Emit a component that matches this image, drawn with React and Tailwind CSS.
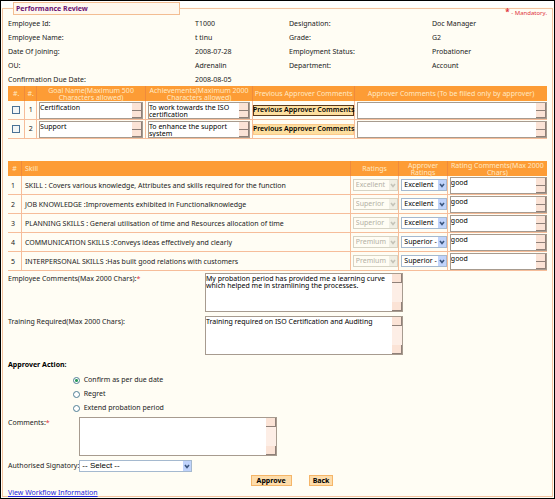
import React, { useState } from "react";

const details = [
  ["Employee Id:", "T1000", "Designation:", "Doc Manager"],
  ["Employee Name:", "t tinu", "Grade:", "G2"],
  ["Date Of Joining:", "2008-07-28", "Employment Status:", "Probationer"],
  ["OU:", "Adrenalin", "Department:", "Account"],
  ["Confirmation Due Date:", "2008-08-05", "", ""],
];

const goals = [
  { goal: "Certification", achievement: "To work towards the ISO certification" },
  { goal: "Support", achievement: "To enhance the support system" },
];

const skills = [
  { text: "SKILL : Covers various knowledge, Attributes and skills required for the function", rating: "Excellent", approver: "Excellent" },
  { text: "JOB KNOWLEDGE :Improvements exhibited in Functionalknowledge", rating: "Superior", approver: "Excellent" },
  { text: "PLANNING SKILLS : General utilisation of time and Resources allocation of time", rating: "Superior", approver: "Excellent" },
  { text: "COMMUNICATION SKILLS :Conveys ideas effectively and clearly", rating: "Premium", approver: "Superior -" },
  { text: "INTERPERSONAL SKILLS :Has built good relations with customers", rating: "Premium", approver: "Superior -" },
];

const actions = ["Confirm as per due date", "Regret", "Extend probation period"];

// Text area with the old style scroll bar beside it
const TextBox = ({ label, id, value = "", tall = false }) => (
  <div
    className={`flex w-full border border-[#a79b8f] bg-white ${tall ? "h-[39px]" : "h-[17px]"}`}
  >
    <textarea
      id={id}
      aria-label={label}
      defaultValue={value}
      className="block h-full min-w-0 flex-1 resize-none overflow-hidden bg-white pt-px leading-[7px] text-black outline-none"
    />
    <div aria-hidden="true" className="flex w-[10px] shrink-0 flex-col justify-between bg-[#fdeee6]">
      <span className={`block border-r border-b border-[#8f8078] bg-[#fbe3d6] ${tall ? "h-[9px]" : "h-[8px]"}`} />
      <span className={`block border-r border-b border-[#8f8078] bg-[#fbe3d6] ${tall ? "h-[9px]" : "h-[7px]"}`} />
    </div>
  </div>
);

const SelectBox = ({ label, id, value, disabled = false, large = false }) => (
  <div className="relative h-[12px] w-full">
    <select
      id={id}
      aria-label={label}
      disabled={disabled}
      className={`block h-full w-full appearance-none overflow-hidden border pr-[9px] pl-[2px] leading-[10px] opacity-100 outline-none ${
        disabled
          ? "border-[#d6d3c4] bg-[#fffdf4] text-[#b3b0a4]"
          : "border-[#a5b9cf] bg-white text-black"
      } ${large ? "font-['Liberation_Sans',sans-serif] text-[8px]" : ""}`}
    >
      <option>{value}</option>
    </select>
    <span
      className={`pointer-events-none absolute top-px right-px bottom-px flex w-[8px] items-center justify-center ${
        disabled ? "bg-[#f0eee3] text-[#c5c3b8]" : "bg-[#c0d3fb] text-[#3c567f]"
      }`}
    >
      <svg viewBox="0 0 6 5" className="h-[5px] w-[6px]" fill="none" stroke="currentColor" strokeWidth="1.6">
        <path d="M1 1 L3 3.4 L5 1" />
      </svg>
    </span>
  </div>
);

const Th = ({ children, left = false }) => (
  <th
    className={`h-[15px] border-r border-[#f08a3c] px-px align-middle leading-[7px] font-normal text-[#ffe9c4] last:border-r-0 ${
      left ? "pl-[3px] text-left" : "text-center"
    }`}
  >
    {children}
  </th>
);

const cell = "h-[19px] border-r border-b border-[#f6bd9a] align-middle last:border-r-0";

const App = () => {
  const [action, setAction] = useState(actions[0]);

  return (
    <div className="min-h-screen border border-black bg-[#fffdf4] font-['Noto_Sans',Verdana,sans-serif] text-[7px] leading-[8px] text-[#222]">
      <form className="bg-gradient-to-b from-white from-[6px] to-[#fffdf4] to-[6px] px-px pt-px pb-px" onSubmit={(e) => e.preventDefault()}>
        <fieldset className="min-w-0 border border-[#f3c3a0] px-[5px] pb-0">
          <legend className="ml-[5px] h-[13px] w-[31%] border border-[#f3bd92] bg-[#fff8ee] px-[2px] pt-[2px] font-bold text-[#6b1273]">
            Performance Review
          </legend>

          <p className="-mt-[7px] h-[9px] text-right text-[6px] text-[#e0323c]">
            <b className="text-[8px]">*</b> - Mandatory.
          </p>

          <dl className="-mb-px">
            {details.map((row) => (
              <div key={row[0]} className="grid h-[14px] grid-cols-[187fr_94fr_143fr_115fr] items-center">
                <dt>{row[0]}</dt>
                <dd>{row[1]}</dd>
                <dt>{row[2]}</dt>
                <dd>{row[3]}</dd>
              </div>
            ))}
          </dl>

          <table className="w-full table-fixed border-separate border-spacing-0">
            <colgroup>
              <col className="w-[3.2%]" />
              <col className="w-[2.2%]" />
              <col className="w-[20.2%]" />
              <col className="w-[19.9%]" />
              <col className="w-[18.9%]" />
              <col />
            </colgroup>
            <thead className="bg-[#fd9c35]">
              <tr>
                <Th>#.</Th>
                <Th>#.</Th>
                <Th>Goal Name(Maximum 500 Characters allowed)</Th>
                <Th>Achievements(Maximum 2000 Characters allowed)</Th>
                <Th>Previous Approver Comments</Th>
                <Th>Approver Comments (To be filled only by approver)</Th>
              </tr>
            </thead>
            <tbody>
              {goals.map((item, index) => (
                <tr key={item.goal}>
                  <td className={cell}>
                    <input
                      type="checkbox"
                      aria-label={`Select ${item.goal}`}
                      className="mx-auto block h-[8px] w-[8px] appearance-none border border-[#4a7296] bg-[#f3f6f6] checked:bg-[#4a7296]"
                    />
                  </td>
                  <td className={`${cell} text-center`}>{index + 1}</td>
                  <td className={`${cell} px-[2px]`}>
                    <TextBox label="Goal Name" value={item.goal} />
                  </td>
                  <td className={`${cell} px-[2px]`}>
                    <TextBox label="Achievements" value={item.achievement} />
                  </td>
                  <td className={cell}>
                    <button
                      type="button"
                      className={`flex h-[11px] w-full items-center justify-center border bg-[#fddf9f] leading-[8px] font-semibold whitespace-nowrap text-black ${
                        index === 0 ? "border-[#5c3a1a]" : "border-[#fbc98a]"
                      }`}
                    >
                      Previous Approver Comments
                    </button>
                  </td>
                  <td className={`${cell} pl-[2px]`}>
                    <TextBox label="Approver Comments" />
                  </td>
                </tr>
              ))}
            </tbody>
          </table>

          <table className="mt-[22px] w-full table-fixed border-separate border-spacing-0">
            <colgroup>
              <col className="w-[2.6%]" />
              <col />
              <col className="w-[9%]" />
              <col className="w-[9%]" />
              <col className="w-[18.4%]" />
            </colgroup>
            <thead className="bg-[#fd9c35]">
              <tr>
                <Th>#</Th>
                <Th left>Skill</Th>
                <Th>Ratings</Th>
                <Th>Approver Ratings</Th>
                <Th>Rating Comments(Max 2000 Chars)</Th>
              </tr>
            </thead>
            <tbody>
              {skills.map((skill, index) => (
                <tr key={skill.text}>
                  <td className={`${cell} pt-px pl-[3px]`}>{index + 1}</td>
                  <td className={`${cell} pt-px pl-[3px] whitespace-nowrap`}>{skill.text}</td>
                  <td className={`${cell} pl-[2px]`}>
                    <SelectBox label="Ratings" value={skill.rating} disabled />
                  </td>
                  <td className={`${cell} pl-[2px]`}>
                    <SelectBox label="Approver Ratings" value={skill.approver} />
                  </td>
                  <td className={`${cell} pl-[2px]`}>
                    <TextBox label="Rating Comments" value="good" />
                  </td>
                </tr>
              ))}
            </tbody>
          </table>

          <div className="mt-[2px] grid grid-cols-[197fr_198fr_144fr] gap-y-[4px]">
            <label htmlFor="employee-comments" className="pt-[2px]">
              Employee Comments(Max 2000 Chars):<span className="text-[#e0323c]">*</span>
            </label>
            <TextBox
              id="employee-comments"
              tall
              value={"My probation period has provided me a learning curve\nwhich helped me in stramlining the processes."}
            />
            <span />
            <label htmlFor="training" className="pt-[2px]">
              Training Required(Max 2000 Chars):
            </label>
            <TextBox id="training" tall value="Training required on ISO Certification and Auditing" />
          </div>

          <h2 className="mt-[6px] font-bold text-black">Approver Action:</h2>
          <div className="mt-[4px] ml-[12%]">
            {actions.map((name) => (
              <label key={name} className="flex h-[14px] items-center gap-[4px]">
                <input
                  type="radio"
                  name="action"
                  checked={action === name}
                  onChange={() => setAction(name)}
                  className="h-[7px] w-[7px] appearance-none rounded-full border border-[#4f7f94] bg-white checked:bg-[radial-gradient(circle,#2a9a5c_1px,#fff_2px)]"
                />
                {name}
              </label>
            ))}
          </div>

          <div className="mt-[2px] grid grid-cols-[71fr_198fr_270fr] gap-y-[4px]">
            <label htmlFor="comments" className="pt-[2px]">
              Comments:<span className="text-[#e0323c]">*</span>
            </label>
            <TextBox id="comments" tall />
            <span />
            <label htmlFor="signatory" className="pt-[2px] whitespace-nowrap">
              Authorised Signatory:
            </label>
            <div className="w-[57%]">
              <SelectBox id="signatory" large value="-- Select --" />
            </div>
          </div>

          <div className="mt-[3px] ml-[45%] flex gap-[17px]">
            <button type="submit" className="h-[11px] border border-[#f5b568] bg-[#fddcaa] px-[5px] leading-[8px] font-bold text-black">
              Approve
            </button>
            <button type="button" className="h-[11px] border border-[#f5b568] bg-[#fddcaa] px-[3px] leading-[8px] font-bold text-black">
              Back
            </button>
          </div>
          <a href="#workflow" className="mt-[3px] block h-[7px] w-fit text-[#2222dd] underline">
            View Workflow Information
          </a>
        </fieldset>
      </form>
    </div>
  );
};

export default App;
